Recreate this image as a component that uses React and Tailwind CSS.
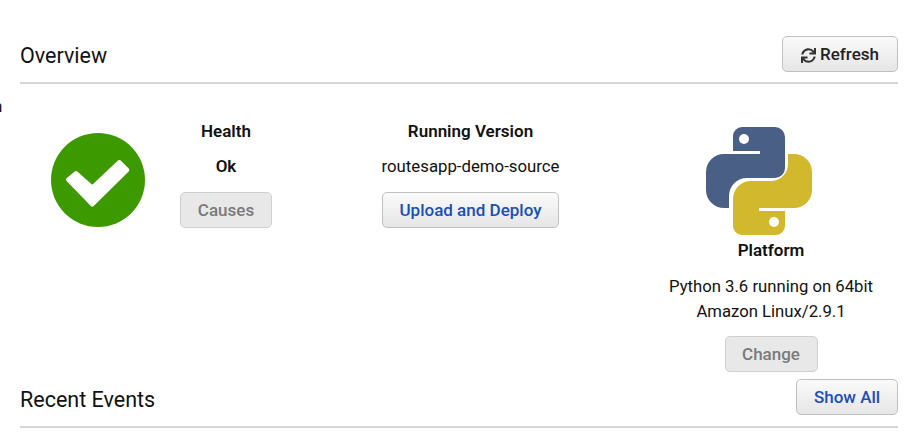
import React from "react";
import { FaSync } from "react-icons/fa";

const font = { fontFamily: "Roboto, sans-serif" };

function PythonLogo() {
    return (
        <svg width="108" height="110" viewBox="705 126 108 110" className="mr-[24px] block shrink-0">
            <path
                fill="#4a5f86"
                d="M742 127H775A10 10 0 0 1 785 137V168A10 10 0 0 1 775 178H747A18 18 0 0 0 729 196V208H724A18 18 0 0 1 706 190V172A18 18 0 0 1 724 154H760V151H733V136A9 9 0 0 1 742 127Z"
            />
            <circle cx="744" cy="139" r="5" fill="#fff" />
            <path
                fill="#d1b82c"
                d="M776 235H742A9 9 0 0 1 733 226V199A18 18 0 0 1 751 181H771A17 17 0 0 0 788 164V154H794A18 18 0 0 1 812 172V190A18 18 0 0 1 794 208H759V211H785V226A9 9 0 0 1 776 235Z"
            />
            <circle cx="774" cy="222" r="5" fill="#fff" />
        </svg>
    );
}

function Check() {
    return (
        <svg width="94" height="94" viewBox="0 0 94 94" className="block">
            <circle cx="47" cy="47" r="47" fill="#3d9900" />
            <polygon
                points="17,46.5 25,40 41.3,54.5 68.3,29 76.3,37 41.3,71.7"
                fill="#fff"
                stroke="#fff"
                strokeWidth="4"
                strokeLinejoin="round"
            />
        </svg>
    );
}

function Btn({ children, className }) {
    return (
        <button className={`flex h-[36px] items-center justify-center rounded-[5px] border border-[#c0c0c0] bg-gradient-to-b from-[#fafafa] to-[#e6e6e6] pt-[2px] text-[17px] font-medium ${className}`}>
            {children}
        </button>
    );
}

function Disabled({ children, className }) {
    return (
        <button className={`flex h-[36px] items-center justify-center rounded-[5px] border border-[#d0d0d0] bg-[#e8e8e8] pt-[2px] text-[17px] font-medium text-[#7a7a7a] ${className}`}>
            {children}
        </button>
    );
}

export default function App() {
    return (
        <div className="relative h-[441px] w-[911px] overflow-hidden bg-white pl-[20px] pr-[13px] pt-[36px] text-[#111]" style={font}>
            <span className="absolute left-[-7px] top-[94px] text-[17px]">n</span>

            <div className="flex h-[48px] items-start justify-between border-b-2 border-[#d5d5d5]">
                <h2 className="pt-[6px] text-[21.5px] leading-[28px]">Overview</h2>
                <Btn className="w-[116px] gap-[4px] text-[#222]">
                    <FaSync className="text-[15px] text-[#333]" />
                    Refresh
                </Btn>
            </div>

            <div className="flex h-[295px]">
                <div className="w-[156px] pl-[31px] pt-[49px]">
                    <Check />
                </div>

                <div className="flex w-[100px] flex-col items-center pt-[36px] text-[17px]">
                    <p className="font-semibold leading-[22px]">Health</p>
                    <p className="mt-[13px] font-semibold leading-[22px]">Ok</p>
                    <Disabled className="mt-[15px] w-[92px]">Causes</Disabled>
                </div>

                <div className="ml-[106px] flex w-[177px] flex-col items-center pt-[36px] text-[17px]">
                    <p className="font-semibold leading-[22px]">Running Version</p>
                    <p className="mt-[13px] whitespace-nowrap text-[16.8px] leading-[22px]">routesapp-demo-source</p>
                    <Btn className="mt-[15px] w-[177px] text-[#1a4fb8]">Upload and Deploy</Btn>
                </div>

                <div className="ml-[92px] flex w-[240px] flex-col items-center pt-[42px] text-[17px]">
                    <PythonLogo />
                    <p className="mt-[3px] font-semibold leading-[22px]">Platform</p>
                    <p className="mt-[13px] text-center text-[16.7px] leading-[25px]">
                        Python 3.6 running on 64bit
                        <br />
                        Amazon Linux/2.9.1
                    </p>
                    <Disabled className="mt-[12px] w-[93px]">Change</Disabled>
                </div>
            </div>

            <div className="flex h-[49px] items-start justify-between border-b-2 border-[#d5d5d5]">
                <h2 className="pt-[7px] text-[21.5px] leading-[28px]">Recent Events</h2>
                <Btn className="w-[102px] text-[#1a4fb8]">Show All</Btn>
            </div>
        </div>
    );
}
